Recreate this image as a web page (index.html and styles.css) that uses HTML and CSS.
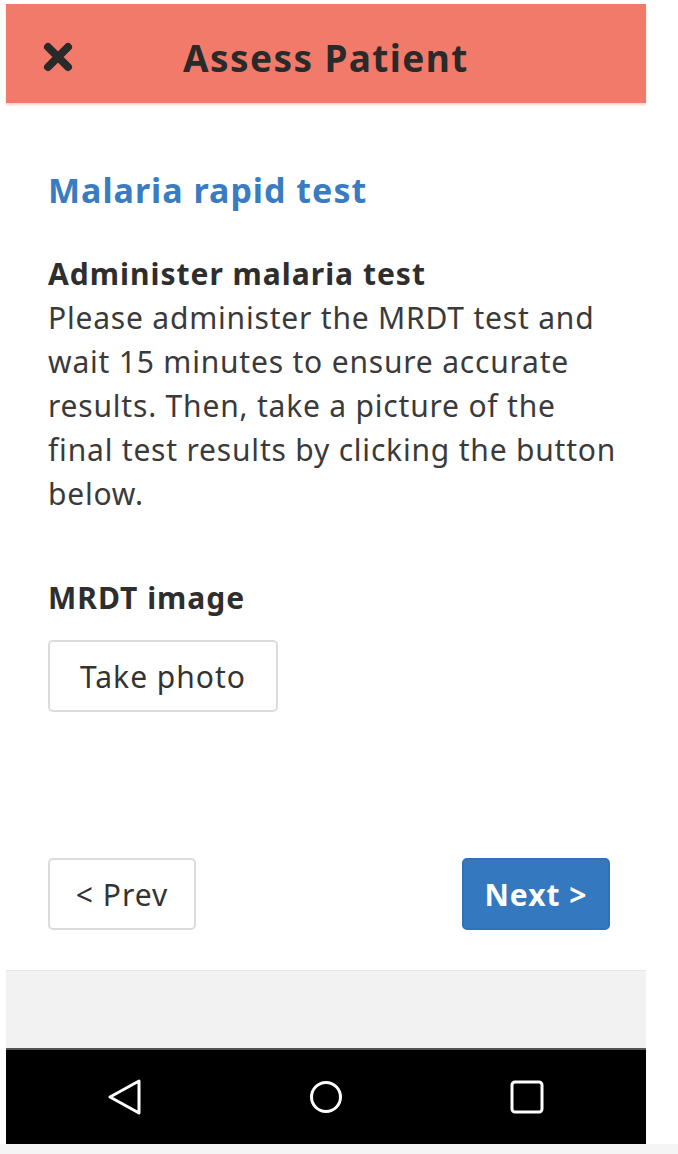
FILE: index.html
```html
<html>
	<head>
		<title>Assess Patient</title>
		<link rel="stylesheet" href="styles.css">
	</head>
	<body>
		<div id="phone">
			<div class="header">
				<div class="close">
					<svg width="30" height="30" viewBox="0 0 30 30"><path d="M5 5 L25 25 M25 5 L5 25" stroke="#2a2a2a" stroke-width="8" stroke-linecap="round"/></svg>
				</div>
				<div class="headTitle">Assess Patient</div>
			</div>

			<div class="main">
				<div class="title">Malaria rapid test</div>

				<div class="label">Administer malaria test</div>
				<div class="text">
					Please administer the MRDT test and wait 15 minutes to ensure accurate results. Then, take a picture of the final test results by clicking the button below.
				</div>

				<div class="label image">MRDT image</div>
				<div class="button photo">Take photo</div>

				<div class="navButtons">
					<div class="button prev">&lt; Prev</div>
					<div class="button next">Next &gt;</div>
				</div>
			</div>

			<div class="footer"></div>

			<div class="sysBar">
				<svg width="34" height="36" viewBox="0 0 34 36"><path d="M31 2 L2 18 L31 34 Z" fill="none" stroke="#fff" stroke-width="3" stroke-linejoin="round"/></svg>
				<svg width="34" height="34" viewBox="0 0 34 34"><circle cx="17" cy="17" r="14.5" fill="none" stroke="#fff" stroke-width="3"/></svg>
				<svg width="34" height="34" viewBox="0 0 34 34"><rect x="2" y="2" width="30" height="30" rx="3" fill="none" stroke="#fff" stroke-width="3"/></svg>
			</div>
		</div>
		<div id="bottomStrip"></div>
	</body>
</html>
```

FILE: styles.css
```css
body {
	margin: 0px;
	padding: 0px;
	background: #fff;
	font-family: 'Noto Sans', 'Open Sans', sans-serif;
	color: #333;
}

#phone {
	width: 640px;
	margin-left: 6px;
	padding-top: 4px;
}

.header {
	display: flex;
	align-items: center;
	height: 99px;
	background: #f27a6a;
	box-shadow: 0 2px 2px rgba(242, 122, 106, 0.35);
	color: #2a2a2a;
}

.header .close {
	width: 30px;
	height: 30px;
	margin-left: 37px;
	margin-top: 6px;
}

.header .headTitle {
	margin-left: 110px;
	margin-top: 8px;
	font-size: 37px;
	letter-spacing: 1.4px;
	font-weight: bold;
}

.main {
	display: flex;
	flex-direction: column;
	align-items: flex-start;
	height: 867px;
	box-sizing: border-box;
	padding: 67px 22px 40px 42px;
}

.main .title {
	font-size: 34px;
	letter-spacing: 1px;
	line-height: 40px;
	font-weight: bold;
	color: #3a7cc2;
	margin-bottom: 42px;
}

.main .label {
	font-size: 30px;
	letter-spacing: 1px;
	line-height: 44px;
	font-weight: bold;
	color: #2e2e2e;
}

.main .label.image {
	margin-top: 60px;
}

.main .text {
	font-size: 30px;
	letter-spacing: 0.8px;
	line-height: 44px;
	color: #3a3a3a;
}

.button {
	display: flex;
	align-items: center;
	justify-content: center;
	box-sizing: border-box;
	height: 72px;
	border: 2px solid #dcdcdc;
	border-radius: 5px;
	background: #fff;
	font-size: 30px;
	letter-spacing: 1px;
	color: #333;
}

.button.photo {
	width: 230px;
	margin-top: 20px;
}

.navButtons {
	display: flex;
	justify-content: space-between;
	align-self: stretch;
	margin-top: auto;
	margin-right: 14px;
}

.button.prev,
.button.next {
	width: 148px;
}

.button.next {
	background: #3479c0;
	border-color: #3072b6;
	color: #fff;
	font-weight: bold;
}

.footer {
	height: 77px;
	background: #f2f2f2;
	border-top: 1px solid #e8e8e8;
	border-bottom: 2px solid #555;
}

.sysBar {
	display: flex;
	align-items: center;
	justify-content: center;
	gap: 167px;
	height: 94px;
	background: #000;
}

#bottomStrip {
	height: 11px;
	background: #f5f5f5;
}
```
